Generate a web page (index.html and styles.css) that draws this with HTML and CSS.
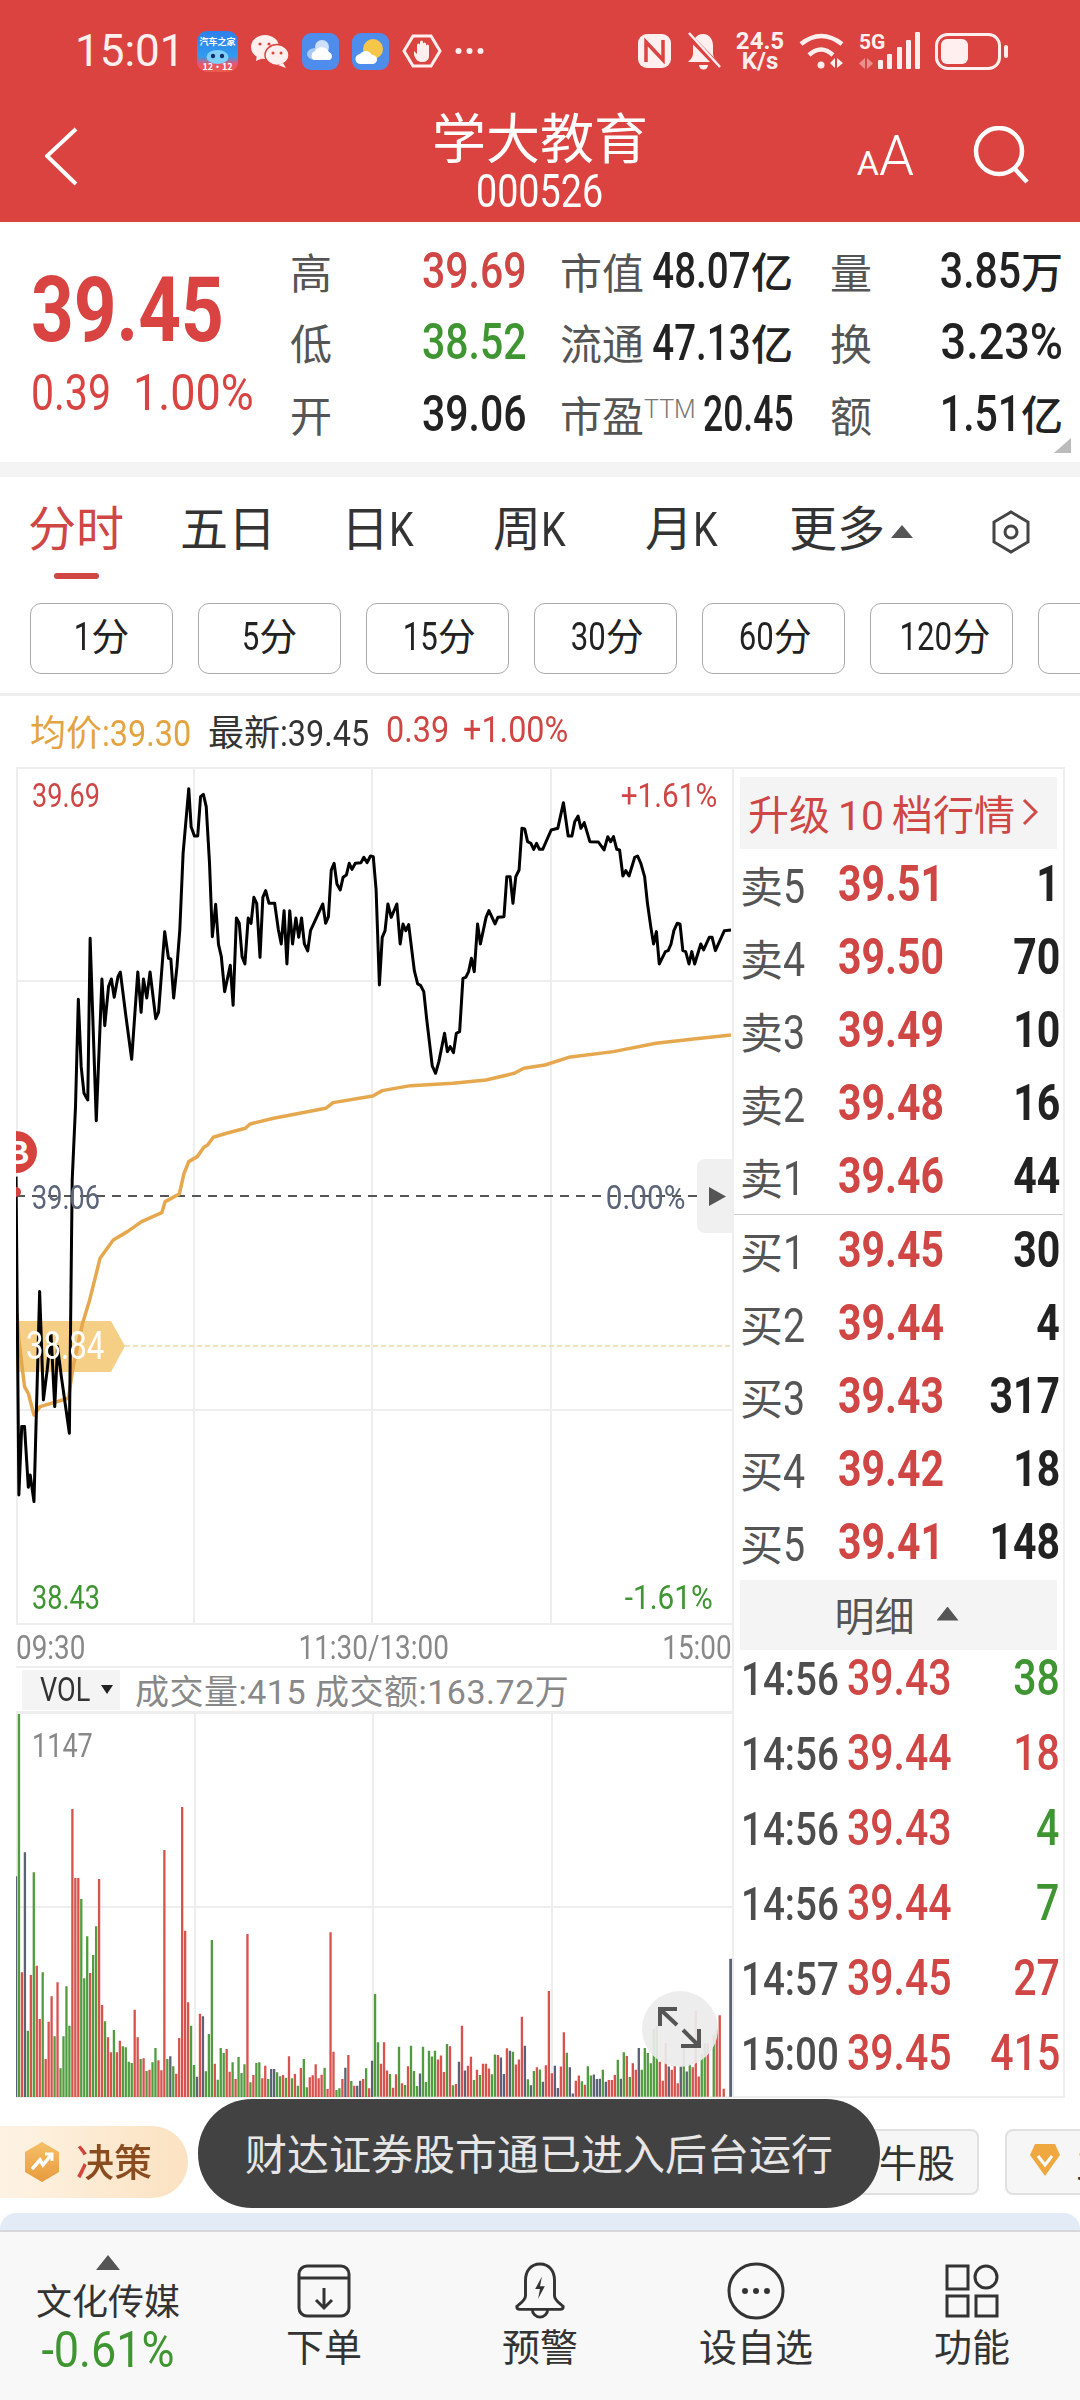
FILE: index.html
```html
<!DOCTYPE html>
<html lang="zh-CN">
  <head>
    <meta charset="UTF-8" />
    <meta name="viewport" content="width=device-width, initial-scale=1.0" />
    <title>学大教育 000526</title>
    <link rel="stylesheet" href="styles.css">
  </head>
  <body>
    <header class="topbar">
      <div class="status">
        <span class="clock">15:01</span>
        <div class="status-icons">
          <svg width="41" height="41" viewBox="0 0 41 41">
            <defs>
              <linearGradient id="carBg" x1="0" y1="0" x2="0" y2="1">
                <stop offset="0" stop-color="#2f7fe8" />
                <stop offset=".62" stop-color="#2f9bf0" />
                <stop offset=".8" stop-color="#e8566e" />
                <stop offset="1" stop-color="#ef5a4a" />
              </linearGradient>
            </defs>
            <rect width="41" height="41" rx="10" fill="url(#carBg)" />
            <text x="20.5" y="14" class="svg-tiny">汽车之家</text>
            <ellipse cx="20.5" cy="26" rx="11" ry="7" fill="#7fd0f8" />
            <circle cx="16" cy="25" r="2.2" fill="#12306a" />
            <circle cx="25" cy="25" r="2.2" fill="#12306a" />
            <text x="20.5" y="39" class="svg-tiny">12·12</text>
          </svg>
          <svg width="38" height="33" viewBox="0 0 38 33">
            <ellipse cx="14" cy="12" rx="14" ry="12" fill="#fff0ef" />
            <path d="M6 20l-1 6 7-3z" fill="#fff0ef" />
            <ellipse cx="26" cy="20" rx="12" ry="10.5" fill="#fff0ef" stroke="#db4340" stroke-width="1.5" />
            <path d="M32 28l3 5-8-3z" fill="#fff0ef" />
            <circle cx="9" cy="9" r="1.6" fill="#db4340" />
            <circle cx="18" cy="9" r="1.6" fill="#db4340" />
            <circle cx="22" cy="18" r="1.5" fill="#db4340" />
            <circle cx="30" cy="18" r="1.5" fill="#db4340" />
          </svg>
          <svg width="37" height="37" viewBox="0 0 37 37">
            <rect width="37" height="37" rx="9" fill="#4f8dec" />
            <ellipse cx="13" cy="21" rx="8" ry="6" fill="#a9c9f6" />
            <circle cx="20" cy="14" r="7" fill="#cfe0fa" />
            <path d="M12 27a5 5 0 0 1 1-9 8 8 0 0 1 14 1 4.500 4.500 0 0 1 1 8z" fill="#fff" />
          </svg>
          <svg width="37" height="37" viewBox="0 0 37 37">
            <rect width="37" height="37" rx="9" fill="#4f8dec" />
            <circle cx="21" cy="16" r="10" fill="#f6c64a" />
            <path d="M9 31a5 5 0 0 1-1-10 7 7 0 0 1 12 1 4.500 4.500 0 0 1 1 9z" fill="#fff" />
          </svg>
          <svg width="40" height="34" viewBox="0 0 40 34">
            <polygon points="11,2 29,2 38,17 29,32 11,32 2,17" fill="none" stroke="#fff0ef" stroke-width="3" />
            <path d="M12 17l3 3v-9a1.500 1.500 0 0 1 3 0v-3a1.500 1.500 0 0 1 3 0v3-1a1.500 1.500 0 0 1 3 0v2a1.500 1.500 0 0 1 3 0v10c0 4-3 6-7 6-4 0-6-2-8-7z" fill="#fff0ef" />
          </svg>
          <svg width="29" height="8" viewBox="0 0 29 8">
            <circle cx="3.500" cy="4" r="3" fill="#fff0ef" />
            <circle cx="14.500" cy="4" r="3" fill="#fff0ef" />
            <circle cx="25.500" cy="4" r="3" fill="#fff0ef" />
          </svg>
        </div>
        <div class="status-icons status-right">
          <svg width="33" height="34" viewBox="0 0 33 34">
            <rect width="33" height="34" rx="9" fill="#fff0ef" />
            <path d="M8 28V8l17 18V6" fill="none" stroke="#db4340" stroke-width="3.500" />
          </svg>
          <svg width="35" height="39" viewBox="0 0 35 39">
            <path d="M17 2c-7 0-10 6-10 12v8c0 3-3 6-5 8h30c-2-2-5-5-5-8v-8c0-6-3-12-10-12z" fill="#fff0ef" />
            <path d="M13 33a4.500 4.500 0 0 0 9 0z" fill="#fff0ef" />
            <path d="M1 2l33 34" stroke="#db4340" stroke-width="6" />
            <path d="M3 1l31 34" stroke="#fff0ef" stroke-width="2.500" />
          </svg>
          <div class="speed"><span>24.5</span><span>K/s</span></div>
          <svg width="45" height="38" viewBox="0 0 45 38">
            <path d="M2 12Q22-4 43 12" fill="none" stroke="#fff0ef" stroke-width="4.500" />
            <path d="M10 23Q22 12 34 23" fill="none" stroke="#fff0ef" stroke-width="4.500" />
            <circle cx="22" cy="33" r="3.500" fill="#fff0ef" />
            <path d="M36 26v10l-5-5zM38 26v10l6-5z" fill="#fff0ef" />
          </svg>
          <svg width="61" height="38" viewBox="0 0 61 38">
            <text x="0" y="17" class="svg-5g">5G</text>
            <path d="M6 26v11l-6-5.500zM8 26v11l6-5.500z" fill="#fff0ef" opacity=".45" />
            <rect x="19" y="28" width="5" height="9" rx="1" fill="#fff0ef" />
            <rect x="28" y="22" width="5" height="15" rx="1" fill="#fff0ef" />
            <rect x="38" y="15" width="5" height="22" rx="1" fill="#fff0ef" />
            <rect x="47" y="8" width="5" height="29" rx="1" fill="#fff0ef" />
            <rect x="56" y="0" width="5" height="37" rx="1" fill="#fff0ef" />
          </svg>
          <svg width="73" height="37" viewBox="0 0 73 37">
            <rect x="1.500" y="1.500" width="63" height="34" rx="11" fill="none" stroke="#fff0ef" stroke-width="3" />
            <rect x="6" y="6" width="27" height="25" rx="6" fill="#fff0ef" />
            <rect x="69" y="12" width="4" height="13" rx="2" fill="#fff0ef" />
          </svg>
        </div>
      </div>
      <div class="titlebar">
        <svg class="back" width="34" height="60" viewBox="0 0 34 60">
          <polyline points="31,2 2,29 31,57" fill="none" stroke="#fff" stroke-width="4" />
        </svg>
        <div class="title">
          <div class="title-name">学大教育</div>
          <div class="title-code"><span class="n nc">000526</span></div>
        </div>
        <div class="title-actions">
          <span class="aa"><small>A</small>A</span>
          <svg width="58" height="58" viewBox="0 0 58 58">
            <circle cx="27" cy="25" r="23" fill="none" stroke="#fff" stroke-width="4.500" />
            <path d="M43 43l12 13" stroke="#fff" stroke-width="4.500" />
          </svg>
        </div>
      </div>
    </header>

    <section class="quote">
      <div class="quote-main">
        <div class="last-price n">39.45</div>
        <div class="last-change"><span class="n chg-abs">0.39</span><span class="n pct">1.00%</span></div>
      </div>
      <div class="quote-grid">
        <span class="q-label">高</span>
        <span class="q-val up n">39.69</span>
        <div class="q-pair"><span class="q-label">市值</span><span class="q-val"><span class="n nr tight">48.07</span><i>亿</i></span></div>
        <div class="q-pair"><span class="q-label">量</span><span class="q-val"><span class="n nr">3.85</span><i>万</i></span></div>
        <span class="q-label">低</span>
        <span class="q-val down n">38.52</span>
        <div class="q-pair"><span class="q-label">流通</span><span class="q-val"><span class="n nr tight">47.13</span><i>亿</i></span></div>
        <div class="q-pair"><span class="q-label">换</span><span class="q-val"><span class="n nr pct">3.23%</span></span></div>
        <span class="q-label">开</span>
        <span class="q-val n">39.06</span>
        <div class="q-pair"><span class="q-label">市盈<sup>TTM</sup></span><span class="q-val"><span class="n nr tighter">20.45</span></span></div>
        <div class="q-pair"><span class="q-label">额</span><span class="q-val"><span class="n nr">1.51</span><i>亿</i></span></div>
      </div>
      <span class="corner"></span>
    </section>

    <nav class="tabs">
      <div class="tab active">分时</div>
      <div class="tab">五日</div>
      <div class="tab">日<span class="n">K</span></div>
      <div class="tab">周<span class="n">K</span></div>
      <div class="tab">月<span class="n">K</span></div>
      <div class="tab">更多<span class="tab-caret"></span></div>
      <svg class="tab-set" width="38" height="44" viewBox="0 0 38 44">
        <polygon points="19,2 36,12 36,32 19,42 2,32 2,12" fill="none" stroke="#444" stroke-width="3" />
        <circle cx="19" cy="22" r="6" fill="none" stroke="#444" stroke-width="3" />
      </svg>
    </nav>
    <div class="chips">
      <div class="chip"><span class="n nr">1</span>分</div>
      <div class="chip"><span class="n nr">5</span>分</div>
      <div class="chip"><span class="n nr">15</span>分</div>
      <div class="chip"><span class="n nr">30</span>分</div>
      <div class="chip"><span class="n nr">60</span>分</div>
      <div class="chip"><span class="n nr">120</span>分</div>
      <div class="chip"></div>
    </div>
    <div class="legend">
      <span class="lg lg-avg avg">均价<span class="n">:39.30</span></span>
      <span class="lg lg-avg">最新<span class="n">:39.45</span></span>
      <span class="lg lg-abs up"><span class="n">0.39</span></span>
      <span class="lg up"><span class="n">+1.00%</span></span>
    </div>

    <main class="board">
      <div class="charts">
        <div class="plot">
          <svg class="plot-svg" width="716" height="858" viewBox="16 767 716 858">
            <path class="grid" d="M194 767V1625M372 767V1625M551 767V1625M16 981H732M16 1410H732M16 768H732M17 767V1625M16 1624H732" />
            <polygon points="16,1321 111,1321 125,1346 111,1372 16,1372" fill="#f6cf86" />
            <path d="M125 1346H732" stroke="#f1dfc1" stroke-width="2" stroke-dasharray="5 3" />
            <path d="M16 1196H700" stroke="#555" stroke-width="2" stroke-dasharray="9 7" />
            <g transform="translate(0,760) scale(.4719,.3333)">
              <polyline class="avg-line" points="36,1660 40,1740 52,1880 60,1900 72,1965 85,1940 145,1915 155,1820 175,1690 190,1620 212,1495 240,1440 270,1415 300,1385 343,1358 350,1325 380,1302 390,1240 400,1205 418,1190 432,1162 440,1155 452,1132 480,1120 520,1105 530,1092 580,1075 690,1045 706,1028 790,1008 810,992 870,977 960,970 1030,960 1090,940 1110,925 1155,915 1205,892 1300,875 1390,850 1470,837 1549,825" />
              <polyline class="price-line" points="34,1250 40,2205 46,2000 52,2000 60,2182 64,2145 72,2225 84,1595 92,1920 100,1830 108,1720 116,1940 122,1760 130,1850 147,2020 153,1260 160,1040 166,718 172,920 178,1000 186,1020 191,535 204,1082 216,657 222,797 230,680 236,657 242,712 250,650 255,636 266,760 279,898 292,636 299,757 304,657 311,714 318,636 330,776 336,757 349,515 357,595 362,597 368,714 375,620 381,510 388,280 400,86 405,200 412,228 419,228 425,110 431,103 437,140 444,310 450,530 457,433 463,553 469,590 476,695 488,616 494,736 501,474 507,490 513,590 519,612 526,474 532,490 538,412 544,430 551,592 557,412 563,392 570,430 582,430 590,510 596,552 602,452 608,612 614,452 620,552 627,474 633,532 639,474 645,552 652,573 658,512 684,432 690,490 696,470 702,330 708,310 714,372 721,390 727,352 734,345 740,310 746,328 753,310 765,308 771,292 778,308 785,288 791,290 797,390 804,675 810,532 816,512 822,432 829,472 841,432 848,552 854,492 860,512 866,494 878,632 885,672 891,676 898,695 904,775 916,918 923,940 930,905 942,820 948,875 954,860 961,878 967,820 974,815 981,655 987,652 993,635 999,595 1005,635 1012,492 1018,552 1030,472 1036,452 1042,470 1049,492 1055,472 1068,470 1074,350 1081,350 1087,430 1093,350 1100,330 1106,205 1112,207 1118,245 1125,250 1131,268 1137,250 1143,268 1150,268 1168,210 1182,205 1194,128 1204,228 1212,228 1218,185 1225,168 1231,205 1238,188 1250,245 1268,246 1280,270 1288,230 1294,245 1300,230 1307,268 1313,270 1320,348 1326,332 1333,348 1345,292 1351,288 1358,310 1366,350 1372,430 1379,500 1385,552 1391,515 1397,612 1410,575 1416,572 1422,552 1428,512 1435,490 1441,492 1447,572 1453,575 1460,612 1466,575 1472,612 1485,552 1491,570 1503,532 1509,532 1516,572 1535,512 1549,510" />
            </g>
            <circle cx="16" cy="1152" r="21" fill="#d6433f" />
            <text x="5" y="1164" class="svg-b">B</text>
            <circle cx="16" cy="1192" r="5" fill="#d6433f" />
          </svg>
          <span class="mark mark-hi up n">39.69</span>
          <span class="mark mark-hi-pct up n nr pct">+1.61%</span>
          <span class="mark mark-mid slate n">39.06</span>
          <span class="mark mark-mid-pct slate n nr pct">0.00%</span>
          <span class="mark mark-lo down n">38.43</span>
          <span class="mark mark-lo-pct down n nr pct">-1.61%</span>
          <span class="mark mark-tag n">38.84</span>
          <div class="fold"><span></span></div>
        </div>
        <div class="axis"><span class="n">09:30</span><span class="n nc">11:30/13:00</span><span class="n nr">15:00</span></div>
        <div class="vol-head">
          <div class="vol-pick"><span class="vol-name n">VOL</span><span class="vol-caret"></span></div>
          <span class="vol-text">成交量:415 成交额:163.72万</span>
        </div>
        <div class="vol-plot">
          <svg width="716" height="384" viewBox="16 1714 716 384">
            <path class="grid" d="M195 1714V2098M373 1714V2098M552 1714V2098M16 1907H732M17 1714V2098M16 2097H732" />
            <g transform="translate(16,1714) scale(.3297,.3333)" fill="none" stroke-width="7">
              <g transform="translate(0,345)">
                <path class="bar-down" d="M9-345V804M36 605V804M54 130V804M81 430V804M117 622V804M135 718V804M144 622V804M153 472V804M162 590V804M198 210V804M207 448V804M216 322V804M234 378V804M243 292V804M270 577V804M297 603V804M324 652V804M333 655V804M342 698V804M351 702V804M378 690V804M396 726V804M414 700V804M423 657V804M459 690V804M477 712V804M531 590V804M540 708V804M576 727V804M585 615V804M594 333V804M612 752V804M621 657V804M630 672V804M657 700V804M675 684V804M684 732V804M693 706V804M711 760V804M729 702V804M738 700V804M765 750V804M792 730V804M801 742V804M819 746V804M837 748V804M855 770V804M873 690V804M882 775V804M936 716V804M972 783V804M981 778V804M1017 756V804M1062 718V804" />
                <path class="bar-up" d="M18 430V804M45 438V804M63 410V804M72 570V804M90 690V804M99 578V804M108 502V804M126 460V804M171-60V804M180 147V804M189 147V804M225 432V804M252 150V804M261 528V804M279 625V804M288 670V804M306 670V804M315 635V804M360 542V804M369 625V804M387 688V804M405 722V804M432 694V804M441 724V804M450 63V804M486 734V804M495 627V804M504-66V804M513 305V804M522 520V804M558 554V804M603 704V804M639 660V804M648 728V804M666 750V804M702 315V804M720 738V804M747 748V804M756 710V804M810 738V804M828 682V804M846 735V804M864 717V804M891 745V804M900 739V804M909 706V804M918 748V804M927 737V804M945 780V804M954 310V804M963 668V804M990 750V804M1008 678V804M1026 770V804M1053 750V804M1071 778V804" />
                <path class="bar-flat" d="M0 142V804M27 70V804M468 682V804M549 743V804M567 562V804M774 720V804M783 720V804M999 716V804M1035 770V804M1044 755V804M1080 695V804" />
              </g>
              <g transform="translate(1089,795) scale(1.0101)">
                <path class="bar-down" d="M0 45V350M9 188V350M45 282V350M72 201V350M90 315V350M108 198V350M117 273V350M126 318V350M144 201V350M153 306V350M162 213V350M171 230V350M180 213V350M216 193V350M234 316V350M297 300V350M315 285V350M351 283V350M360 224V350M414 216V350M459 298V350M477 273V350M495 269V350M576 219V350M621 304V350M639 259V350M648 287V350M684 270V350M729 240V350M747 218V350M765 291V350M801 270V350M810 205V350M819 220V350M828 250V350M837 148V350M846 140V350M927 200V350M945 252V350M981 222V350M990 190V350M1017 165V350" />
                <path class="bar-up" d="M18 252V350M27 188V350M36 272V350M54 323V350M63 283V350M81 310V350M99 259V350M189 239V350M198 227V350M207 276V350M225 200V350M243 312V350M261 139V350M279 258V350M288 231V350M306 270V350M324 252V350M333 252V350M342 266V350M369 226V350M396 206V350M423 254V350M432 239V350M441 112V350M486 262V350M513 256V350M522 36V350M531 280V350M558 260V350M567 158V350M603 302V350M612 287V350M630 314V350M702 300V350M711 300V350M720 285V350M756 229V350M774 250V350M783 270V350M855 246V350M864 302V350M873 190V350M891 270V350M900 258V350M909 310V350M954 262V350M963 95V350M972 290V350M999 192V350M1026 150V350M1035 108V350M1047 326V350" />
                <path class="bar-flat" d="M135 281V350M252 246V350M270 272V350M378 233V350M387 282V350M405 213V350M450 198V350M468 316V350M504 305V350M540 258V350M549 324V350M585 262V350M594 340V350M657 284V350M666 297V350M675 296V350M693 305V350M738 296V350M792 205V350M882 260V350M918 258V350M936 275V350" />
                <path class="bar-flat bar-last" d="M1068-60V350" />
              </g>
            </g>
            <circle cx="680" cy="2029" r="38" fill="#ececec" fill-opacity=".92" />
            <path d="M677 2025L661 2010M677 2009H660V2026M683 2030L698 2045M699 2029V2046H681" fill="none" stroke="#555" stroke-width="4" />
          </svg>
          <span class="mark mark-vol n">1147</span>
        </div>
      </div>

      <aside class="book">
        <div class="book-upgrade">
          <span>升级<span class="up-num">10</span>档行情</span>
          <svg width="16" height="28" viewBox="0 0 16 28"><polyline points="2,2 14,14 2,26" fill="none" stroke="#d04a46" stroke-width="3" /></svg>
        </div>
        <div class="book-row"><span class="b-side">卖<b class="n">5</b></span><span class="b-price n">39.51</span><span class="b-qty n nr">1</span></div>
        <div class="book-row"><span class="b-side">卖<b class="n">4</b></span><span class="b-price n">39.50</span><span class="b-qty n nr">70</span></div>
        <div class="book-row"><span class="b-side">卖<b class="n">3</b></span><span class="b-price n">39.49</span><span class="b-qty n nr">10</span></div>
        <div class="book-row"><span class="b-side">卖<b class="n">2</b></span><span class="b-price n">39.48</span><span class="b-qty n nr">16</span></div>
        <div class="book-row"><span class="b-side">卖<b class="n">1</b></span><span class="b-price n">39.46</span><span class="b-qty n nr">44</span></div>
        <div class="book-split"></div>
        <div class="book-row"><span class="b-side">买<b class="n">1</b></span><span class="b-price n">39.45</span><span class="b-qty n nr">30</span></div>
        <div class="book-row"><span class="b-side">买<b class="n">2</b></span><span class="b-price n">39.44</span><span class="b-qty n nr">4</span></div>
        <div class="book-row"><span class="b-side">买<b class="n">3</b></span><span class="b-price n">39.43</span><span class="b-qty n nr">317</span></div>
        <div class="book-row"><span class="b-side">买<b class="n">4</b></span><span class="b-price n">39.42</span><span class="b-qty n nr">18</span></div>
        <div class="book-row"><span class="b-side">买<b class="n">5</b></span><span class="b-price n">39.41</span><span class="b-qty n nr">148</span></div>
        <div class="book-detail">明细<span class="detail-caret"></span></div>
        <div class="ticks">
          <div class="tick"><span class="t-time n">14:56</span><span class="t-price n">39.43</span><span class="t-qty down n nr">38</span></div>
          <div class="tick"><span class="t-time n">14:56</span><span class="t-price n">39.44</span><span class="t-qty up n nr">18</span></div>
          <div class="tick"><span class="t-time n">14:56</span><span class="t-price n">39.43</span><span class="t-qty down n nr">4</span></div>
          <div class="tick"><span class="t-time n">14:56</span><span class="t-price n">39.44</span><span class="t-qty down n nr">7</span></div>
          <div class="tick"><span class="t-time n">14:57</span><span class="t-price n">39.45</span><span class="t-qty up n nr">27</span></div>
          <div class="tick"><span class="t-time n">15:00</span><span class="t-price n">39.45</span><span class="t-qty up n nr">415</span></div>
        </div>
      </aside>
    </main>

    <div class="promo">
      <div class="pill">
        <svg width="38" height="42" viewBox="0 0 38 42">
          <defs>
            <linearGradient id="hexGold" x1="0" y1="0" x2="0" y2="1">
              <stop offset="0" stop-color="#f6c068" />
              <stop offset="1" stop-color="#e89a3e" />
            </linearGradient>
          </defs>
          <polygon points="19,1 36,11 36,31 19,41 2,31 2,11" fill="url(#hexGold)" />
          <path d="M9 28l8-9 3 5 8-10" fill="none" stroke="#fff" stroke-width="3.500" />
          <path d="M22 13h7v7" fill="none" stroke="#fff" stroke-width="3" />
        </svg>
        <span class="pill-text">决策</span>
      </div>
      <div class="tag tag-bull">牛股</div>
      <div class="tag tag-gem">
        <svg width="32" height="34" viewBox="0 0 32 34">
          <path d="M6 1h20l5 11-15 21L1 12z" fill="#efa83f" />
          <path d="M9 13l7 9 7-9" fill="none" stroke="#fff" stroke-width="3" />
        </svg>
        <span>主</span>
      </div>
      <div class="toast">财达证券股市通已进入后台运行</div>
    </div>
    <div class="strip"></div>

    <footer class="dock">
      <div class="dock-item dock-sector">
        <span class="dock-caret"></span>
        <span class="sector-name">文化传媒</span>
        <span class="sector-pct down n nc pct">-0.61%</span>
      </div>
      <div class="dock-item">
        <svg width="54" height="54" viewBox="0 0 54 54">
          <rect x="2" y="2" width="50" height="50" rx="8" class="dock-line" />
          <path d="M2 14H52M27 24V44M19 36L27 44L35 36" class="dock-line" />
        </svg>
        <span>下单</span>
      </div>
      <div class="dock-item">
        <svg width="54" height="60" viewBox="0 0 54 60">
          <path d="M27 2c-10 0-15 8-15 17v16c0 5-6 8-9 11 0 2 1 3 3 3h42c2 0 3-1 3-3-3-3-9-6-9-11V19c0-9-5-17-15-17z" class="dock-line" />
          <path d="M19 49a8 8 0 0 0 16 0" class="dock-line" />
          <path d="M29 15l-7 13h5l-2 10 7-13h-5z" fill="#333" />
        </svg>
        <span>预警</span>
      </div>
      <div class="dock-item">
        <svg width="58" height="58" viewBox="0 0 58 58">
          <circle cx="29" cy="29" r="27" class="dock-line" />
          <circle cx="18" cy="29" r="3" fill="#333" />
          <circle cx="29" cy="29" r="3" fill="#333" />
          <circle cx="40" cy="29" r="3" fill="#333" />
        </svg>
        <span>设自选</span>
      </div>
      <div class="dock-item">
        <svg width="54" height="54" viewBox="0 0 54 54">
          <rect x="2" y="2" width="21" height="23" class="dock-line" />
          <circle cx="41" cy="13" r="11" class="dock-line" />
          <rect x="2" y="32" width="21" height="20" class="dock-line" />
          <rect x="31" y="32" width="21" height="20" class="dock-line" />
        </svg>
        <span>功能</span>
      </div>
    </footer>
  </body>
</html>
```

FILE: styles.css
```css
:root {
  --red: #db4340;
  --up: #cf4644;
  --down: #3f9532;
  --ink: #222;
  --label: #555;
  --line: #eee;
  --panel: #f4f4f4;
  --num: Roboto, "Noto Sans CJK SC", sans-serif;
  --cjk: "Noto Sans CJK SC", sans-serif;
}
* {
  box-sizing: border-box;
  margin: 0;
  padding: 0;
}
body {
  width: 1080px;
  height: 2400px;
  overflow: hidden;
  background: #fff;
  color: var(--ink);
  font-family: var(--num);
  white-space: nowrap;
}
svg {
  display: block;
  flex: none;
}
.up { color: var(--up); }
.down { color: var(--down); }
.slate { color: #5b6478; }

/* the app's numerals are a narrow DIN cut, no such face is installed */
.n {
  display: inline-block;
  transform: scaleX(.82);
  transform-origin: left center;
}
.nr { transform-origin: right center; }
.nc { transform-origin: center center; }
.pct { transform: scaleX(.9); }
.tight { transform: scaleX(.77); }
.tighter { transform: scaleX(.71); }

/* top red bar */
.topbar {
  height: 222px;
  background: var(--red);
  color: #fff;
}
.status {
  display: flex;
  align-items: center;
  height: 102px;
  padding: 0 72px 0 75px;
}
.clock {
  width: 122px;
  font-size: 44px;
  color: #fff0ef;
}
.status-icons {
  display: flex;
  align-items: center;
  gap: 13px;
}
.status-right {
  gap: 15px;
  margin-left: auto;
}
.speed {
  display: flex;
  flex-direction: column;
  align-items: center;
  width: 48px;
  font-size: 24px;
  font-weight: 700;
  line-height: 20px;
  color: #fff0ef;
}
.svg-tiny {
  font-family: var(--cjk);
  font-size: 9px;
  font-weight: 700;
  fill: #fff;
  text-anchor: middle;
}
.svg-5g {
  font-family: Roboto, sans-serif;
  font-size: 21px;
  font-weight: 700;
  fill: #fff0ef;
}
.titlebar {
  display: grid;
  grid-template-columns: 1fr auto 1fr;
  height: 120px;
}
.back {
  margin: 25px 0 0 45px;
}
.title {
  text-align: center;
  padding-top: 4px;
}
.title-name {
  font-family: var(--cjk);
  font-size: 54px;
  line-height: 60px;
}
.title-code {
  padding-top: 2px;
  font-size: 46px;
  line-height: 46px;
}
.title-actions {
  display: flex;
  align-items: flex-end;
  justify-content: flex-end;
  gap: 58px;
  padding: 0 50px 38px 0;
}
.aa {
  height: 48px;
  margin-bottom: 4px;
  font-size: 56px;
  font-weight: 300;
  line-height: 48px;
}
.aa small {
  font-size: 34px;
  font-weight: 400;
}

/* quote block */
.quote {
  display: flex;
  position: relative;
  height: 240px;
}
.quote-main {
  width: 290px;
  padding: 38px 0 0 31px;
  color: #d94442;
}
.last-price {
  display: block;
  font-size: 91px;
  font-weight: 700;
  line-height: 100px;
}
.last-change {
  display: flex;
  margin-top: 8px;
  font-size: 50px;
  line-height: 50px;
}
.chg-abs {
  width: 102px;
}
.quote-grid {
  display: grid;
  grid-template-columns: 132px 138px 270px 233px;
  grid-auto-rows: 71.5px;
  align-items: center;
  padding-top: 13px;
}
.q-label {
  font-family: var(--cjk);
  font-size: 42px;
  line-height: 50px;
  color: var(--label);
}
.q-label sup {
  font-family: var(--num);
  font-size: 25px;
  font-weight: 300;
  line-height: 0;
  vertical-align: 14px;
  color: #777;
}
.q-val {
  font-size: 50px;
  font-weight: 500;
  line-height: 50px;
}
.q-val .nr {
  margin-left: -30px;
}
.q-val i {
  font-family: var(--cjk);
  font-size: 42px;
  font-style: normal;
  font-weight: 500;
}
.q-pair {
  display: flex;
  justify-content: space-between;
  align-items: center;
  width: 233px;
}
.corner {
  position: absolute;
  right: 9px;
  bottom: 9px;
  width: 17px;
  height: 15px;
  background: #bbb;
  clip-path: polygon(100% 0, 100% 100%, 0 100%);
}

/* period tabs */
.tabs {
  display: grid;
  grid-template-columns: repeat(5, 152px) 182px 1fr;
  height: 141px;
  padding-top: 25px;
  border-top: 15px solid var(--panel);
  font-size: 48px;
  line-height: 56px;
  color: #333;
  text-align: center;
}
.tab.active {
  color: var(--up);
}
.tab.active::after {
  content: "";
  display: block;
  width: 45px;
  height: 6px;
  margin: 15px auto 0;
  border-radius: 3px;
  background: var(--up);
}
.tab-caret {
  display: inline-block;
  width: 22px;
  height: 13px;
  margin-left: 6px;
  vertical-align: 8px;
  background: #555;
  clip-path: polygon(50% 0, 100% 100%, 0 100%);
}
.tab-set {
  margin: 8px 0 0 50px;
}
.chips {
  display: flex;
  gap: 25px;
  height: 93px;
  padding-left: 30px;
  overflow: hidden;
  border-bottom: 3px solid var(--line);
}
.chip {
  flex: none;
  width: 143px;
  height: 71px;
  padding-right: 4px;
  border: 1.5px solid #aaa;
  border-radius: 11px;
  font-size: 38px;
  line-height: 66px;
  text-align: center;
  color: #222;
}
.legend {
  display: flex;
  align-items: center;
  height: 71px;
  padding: 0 0 4px 30px;
  font-size: 36px;
  color: #333;
}
.lg .n {
  transform: scaleX(.9);
}
.lg-avg {
  width: 178px;
}
.lg-abs {
  width: 77px;
}
.avg {
  color: #e3a33f;
}

/* chart + order book */
.board {
  display: flex;
  height: 1331px;
  margin-left: 16px;
}
.charts {
  flex: none;
  width: 716px;
}
.plot,
.vol-plot {
  position: relative;
}
.plot {
  height: 858px;
}
.grid {
  fill: none;
  stroke: var(--line);
  stroke-width: 2;
}
.avg-line,
.price-line {
  fill: none;
  stroke-width: 3;
  stroke-linejoin: round;
  vector-effect: non-scaling-stroke;
}
.avg-line {
  stroke: #e6a84e;
  stroke-width: 3.5;
}
.price-line {
  stroke: #000;
}
.svg-b {
  font-family: "Liberation Sans", sans-serif;
  font-size: 34px;
  font-weight: 700;
  fill: #fff;
}
.mark {
  position: absolute;
  font-size: 33px;
  line-height: 36px;
}
.mark-hi { top: 11px; left: 16px; }
.mark-hi-pct { top: 11px; right: 15px; }
.mark-mid { top: 413px; left: 16px; }
.mark-mid-pct { top: 413px; right: 46px; }
.mark-lo { top: 813px; left: 16px; }
.mark-lo-pct { top: 813px; right: 19px; }
.mark-tag {
  top: 559px;
  left: 10px;
  font-size: 38px;
  line-height: 40px;
  color: #fff;
}
.mark-vol {
  top: 14px;
  left: 16px;
  color: #888;
}
.fold {
  position: absolute;
  top: 392px;
  right: 0;
  width: 35px;
  height: 74px;
  border-radius: 8px 0 0 8px;
  background: #f0f0f0;
}
.fold span {
  display: block;
  width: 17px;
  height: 19px;
  margin: 28px 0 0 12px;
  background: #555;
  clip-path: polygon(0 0, 100% 50%, 0 100%);
}
.axis {
  display: flex;
  justify-content: space-between;
  height: 41px;
  font-size: 34px;
  line-height: 44px;
  color: #888;
}
.vol-head {
  display: flex;
  align-items: center;
  gap: 15px;
  height: 48px;
  padding-left: 6px;
  border-top: 2px solid var(--line);
  border-bottom: 3px solid var(--line);
  font-size: 34px;
  color: #888;
}
.vol-text {
  letter-spacing: .5px;
}
.vol-pick {
  display: flex;
  align-items: center;
  width: 98px;
  height: 40px;
  padding-left: 18px;
  background: var(--panel);
  font-size: 33px;
  color: #333;
}
.vol-name {
  width: 61px;
}
.vol-caret {
  width: 12px;
  height: 9px;
  background: #222;
  clip-path: polygon(0 0, 100% 0, 50% 100%);
}
.vol-plot {
  height: 384px;
}
.bar-up { stroke: #d8524e; }
.bar-down { stroke: #529c40; }
.bar-flat { stroke: #5b6275; }
.bar-last { stroke-width: 9; }

.book {
  flex: none;
  width: 333px;
  padding: 8px 6px 0;
  border: 2px solid var(--line);
}
.book-upgrade {
  display: flex;
  align-items: center;
  justify-content: space-between;
  height: 72px;
  padding: 0 19px 3px 8px;
  background: var(--panel);
  font-family: var(--cjk);
  font-size: 41px;
  color: var(--up);
}
.up-num {
  margin: 0 8px;
  font-family: var(--num);
}
.book-row {
  display: flex;
  align-items: center;
  height: 73px;
  margin-right: -3px;
  padding-bottom: 3px;
}
.b-side {
  width: 98px;
  font-family: var(--cjk);
  font-size: 43px;
  color: var(--label);
}
.b-side b {
  font-family: var(--num);
  font-size: 48px;
  font-weight: 400;
}
.b-price {
  font-size: 50px;
  font-weight: 700;
  color: var(--up);
}
.b-qty {
  margin-left: auto;
  font-size: 50px;
  font-weight: 700;
}
.book-split {
  height: 1px;
  margin: 0 -6px;
  background: #ccc;
}
.book-detail {
  display: flex;
  align-items: center;
  justify-content: center;
  gap: 22px;
  height: 70px;
  padding: 0 4px 3px 0;
  background: var(--panel);
  font-family: var(--cjk);
  font-size: 40px;
  color: var(--label);
}
.detail-caret {
  width: 22px;
  height: 14px;
  background: #555;
  clip-path: polygon(50% 0, 100% 100%, 0 100%);
}
.ticks {
  display: grid;
  grid-auto-rows: 58px;
  gap: 17px;
}
.tick {
  display: flex;
  align-items: center;
  padding: 0 0 2px 1px;
  font-size: 50px;
  font-weight: 500;
}
.t-time {
  width: 106px;
  color: #4d4d4d;
  font-size: 47px;
}
.t-price {
  color: var(--up);
}
.t-qty {
  margin-left: auto;
}

/* promo row under the chart */
.promo {
  display: flex;
  align-items: flex-start;
  position: relative;
  height: 115px;
  overflow: hidden;
  font-family: var(--cjk);
}
.pill {
  display: flex;
  align-items: center;
  gap: 15px;
  flex: none;
  width: 188px;
  height: 72px;
  margin-top: 28px;
  padding-left: 23px;
  border-radius: 0 36px 36px 0;
  background: linear-gradient(90deg, #fdf3e4, #fbe2c1);
}
.pill-text {
  padding-bottom: 5px;
  font-size: 38px;
  font-weight: 500;
  background: linear-gradient(90deg, #d8433f 9px, #8a4d1f 9px);
  -webkit-background-clip: text;
  background-clip: text;
  color: transparent;
}
.tag {
  display: flex;
  align-items: center;
  flex: none;
  height: 66px;
  margin-top: 31px;
  padding-bottom: 4px;
  border: 2px solid #e0e0e0;
  border-radius: 8px;
  background: #f6f6f6;
  font-size: 38px;
  color: #333;
}
.tag-bull {
  justify-content: flex-end;
  width: 159px;
  margin-left: 632px;
  padding-right: 22px;
}
.tag-gem {
  gap: 15px;
  width: 200px;
  margin-left: 26px;
  padding-left: 22px;
}
.toast {
  position: absolute;
  top: 1px;
  left: 198px;
  width: 682px;
  height: 109px;
  border-radius: 54px;
  background: #424242;
  font-size: 42px;
  line-height: 106px;
  text-align: center;
  color: #e6e6e6;
}
.strip {
  height: 19px;
  border-bottom: 2px solid #d8d8dc;
  border-radius: 16px 16px 0 0;
  background: #e3ebf7;
}

/* bottom dock */
.dock {
  display: grid;
  grid-template-columns: repeat(5, 1fr);
  height: 168px;
  background: #f8f8f8;
  font-family: var(--cjk);
  font-size: 38px;
  color: #333;
}
.dock-item {
  display: flex;
  flex-direction: column;
  align-items: center;
  padding-top: 30px;
  line-height: 50px;
}
.dock-item svg {
  height: 58px;
}
.dock-line {
  fill: none;
  stroke: #333;
  stroke-width: 3;
}
.dock-sector {
  padding-top: 23px;
}
.dock-caret {
  width: 24px;
  height: 15px;
  margin-bottom: 4px;
  background: #555;
  clip-path: polygon(50% 0, 100% 100%, 0 100%);
}
.sector-name {
  font-size: 36px;
  line-height: 50px;
}
.sector-pct {
  font-family: var(--num);
  font-size: 50px;
  line-height: 52px;
}
```
